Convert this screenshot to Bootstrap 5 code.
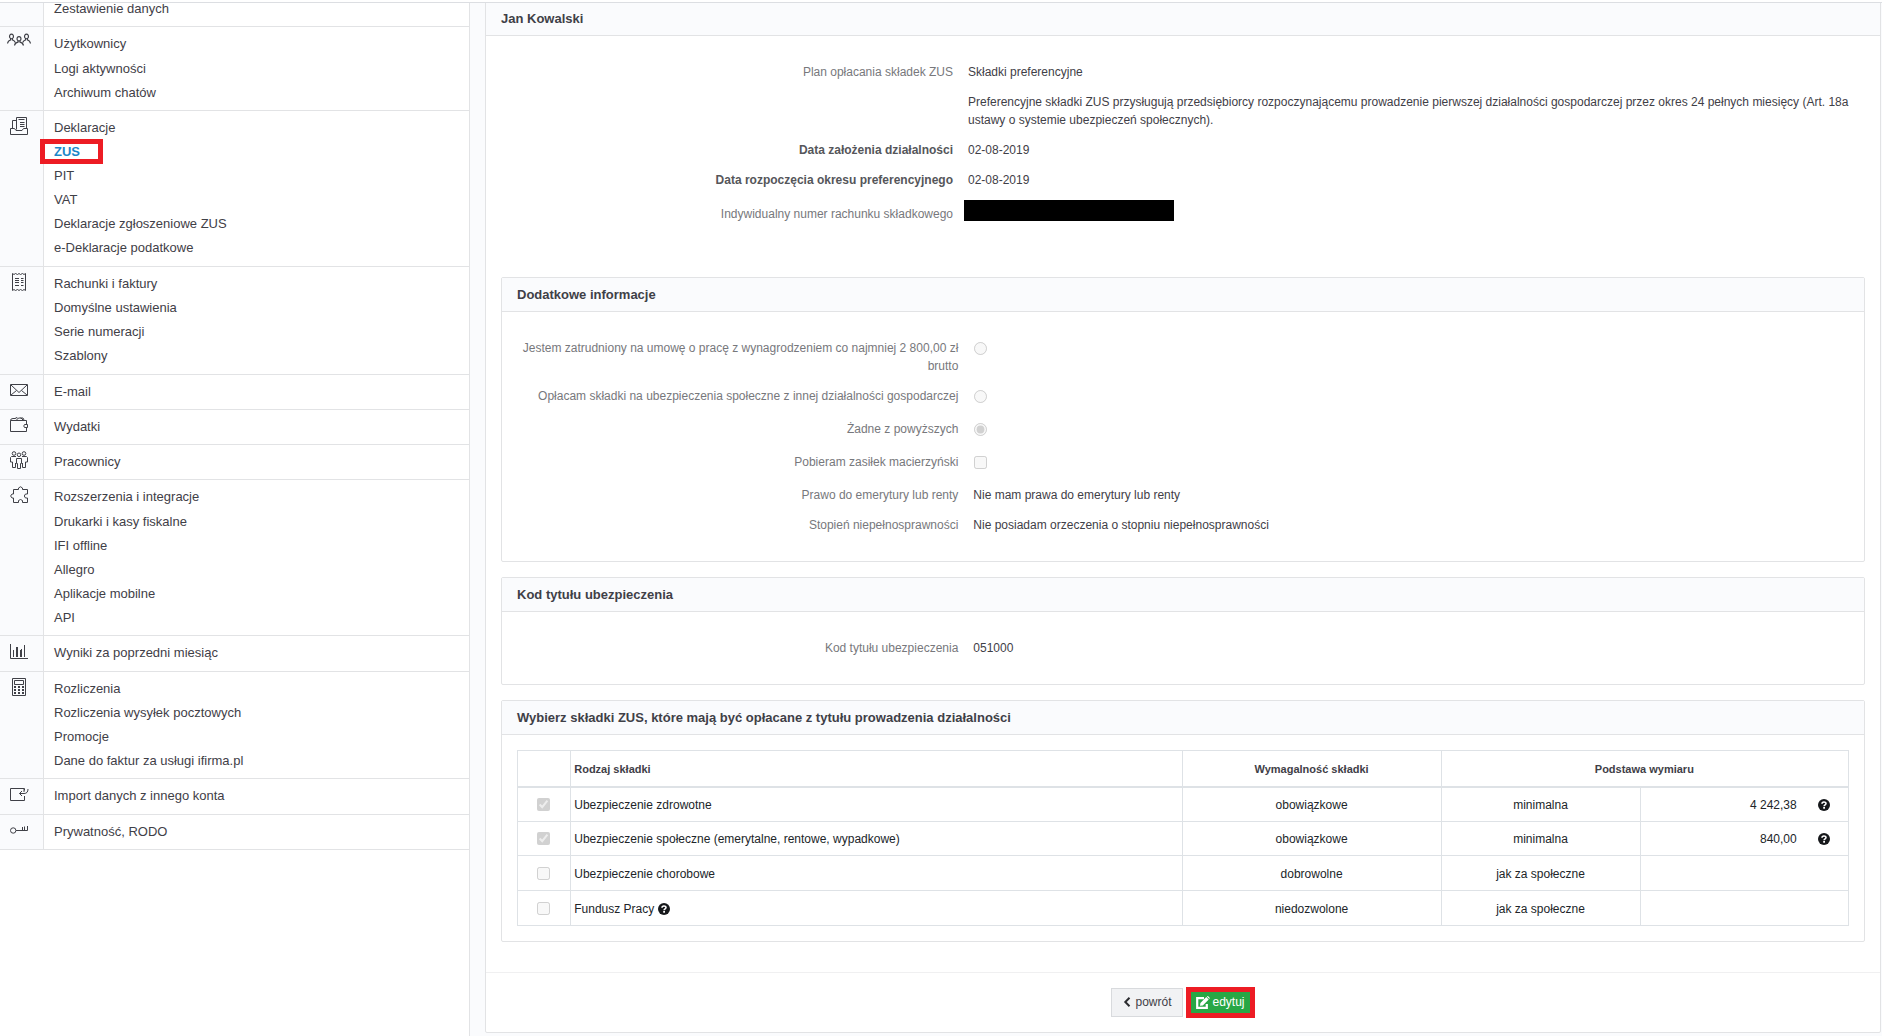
<!DOCTYPE html>
<html lang="pl">
<head>
<meta charset="utf-8">
<meta name="viewport" content="width=device-width, initial-scale=1">
<title>Deklaracje ZUS</title>
<link href="https://cdn.jsdelivr.net/npm/bootstrap@5.3.0/dist/css/bootstrap.min.css" rel="stylesheet">
<style>
:root{--line:#e2e3e5;--tint:#fafbfd;--ink:#3f4047;--red:#ed1c24}
body{font-family:"Liberation Sans",Arial,sans-serif;font-size:12px;line-height:18px;color:var(--ink);background:var(--tint)}
.top-strip{height:3px;background:#fff;border-bottom:1px solid #dcdee2;z-index:10}
/* side menu: content is scrolled slightly under the top strip */
.side-menu{width:25%;max-width:470px;margin-top:-6px;background:#fff;border-right:1px solid var(--line)}
.menu-group{border-bottom:1px solid var(--line)}
.menu-icon{flex:0 0 43px;background:var(--tint);padding:6px 0 0 10px}
.menu-icon svg{display:block;width:18px;height:18px;overflow:visible;fill:none;stroke:var(--ink);stroke-width:1}
.menu-links{border-left:1px solid var(--line);padding:5px 10px}
.menu-links.multi{padding-bottom:6px}
.menu-links.headed a:first-child{margin-bottom:1px}
.menu-links.cut{padding-top:0}
.menu-links a{display:block;width:max-content;max-width:100%;font-size:13px;line-height:24px;color:var(--ink);text-decoration:none}
.menu-links a.current{position:relative;color:#1b87c9;font-weight:700}
.menu-links a.current::after{content:"";position:absolute;inset:-1px -23px 0 -14px;border:5px solid var(--red)}
.main-area{margin:-2px 1px 3px 15px;min-width:0}
.panel{background:#fff;border:1px solid var(--line);border-radius:2px}
.panel-title{font-size:13px;font-weight:700;line-height:18px;margin:0;padding:8px 15px 7px;background:var(--tint);border-bottom:1px solid var(--line)}
.panel-inner{padding:15px}
.panel .panel{margin-bottom:15px}
.fields{padding:6px 0}
.fields .row{padding:6px 0}
.fields .field-label{text-align:right;padding-right:0;color:#77787c}
.fields .field-label.strong{font-weight:700;color:#55565a}
.fields .field-value{padding-left:15px}
.fields input{display:block;margin:3px 0 5px 1px}
.panel input{width:13px;height:13px}
.redacted{display:block;width:210px;height:21px;margin:-1px 0 0 -4px;background:#000}
.account-row .field-label{padding-top:4px}
.fields.spaced{padding-bottom:48px}
.rates{table-layout:fixed;margin:0;--bs-table-color:#212529;border-color:#dee2e6}
.rates th,.rates td{padding:8px 4px 7px 3px;vertical-align:middle;line-height:18px}
.rates tbody tr:nth-child(n+3) td{padding-top:9px}
.rates th{font-size:11px;color:var(--ink);height:36px}
.rates thead th{border-bottom:2px solid #dee2e6}
.rates input{display:block;margin:0 auto}
.c-check{width:4%}.c-kind{width:46%}.c-need{width:19.4%}.c-base{width:15%}
.amount svg{margin:0 14px 0 18px}
.help{width:12px;height:12px;vertical-align:-2px}
.actions{border-top:1px solid #f0f0f1;padding:14px;gap:3px}
.btn-plain,.btn-edit{--bs-btn-font-size:12px;--bs-btn-line-height:18px;--bs-btn-border-radius:0}
.btn-plain{--bs-btn-padding-x:10px;--bs-btn-padding-y:5px;--bs-btn-bg:#f1f2f4;--bs-btn-border-color:#d8dadd;--bs-btn-color:#3f4047;height:29px}
.btn-edit{--bs-btn-padding-x:5px;--bs-btn-padding-y:1px;--bs-btn-bg:#28a745;--bs-btn-color:#fff;--bs-btn-border-color:#ed1c24;--bs-btn-border-width:5px;height:31px}
.btn svg{margin-right:3px}
</style>
<script src="https://cdn.jsdelivr.net/npm/bootstrap@5.3.0/dist/js/bootstrap.bundle.min.js"></script>
</head>
<body>
<svg class="d-none" aria-hidden="true">
  <symbol id="q" viewBox="0 0 12 12"><circle cx="6" cy="6" r="6" fill="#16181b"/><path d="M4 4.700C4 2.500 8 2.500 8 4.600C8 5.900 6.100 5.800 6.100 7.200" fill="none" stroke="#fff" stroke-width="1.600"/><rect x="5.200" y="8" width="1.800" height="1.700" fill="#fff"/></symbol>
</svg>
<div class="top-strip sticky-top"></div>
<div class="d-flex align-items-stretch">
  <nav class="side-menu flex-shrink-0" aria-label="Menu konfiguracji">
    <div class="menu-group d-flex"><div class="menu-icon"></div>
      <div class="menu-links cut flex-grow-1"><a href="#">Zestawienie danych</a></div></div>
    <div class="menu-group d-flex"><div class="menu-icon"><svg viewBox="0 0 18 18"><path stroke-width="1.200" d="M-.3 4.500C-1.500 0 4.500 0 3.300 4.500Q1.500 7 -.3 4.500M14.700 4.500C13.500 0 19.500 0 18.300 4.500Q16.500 7 14.700 4.500M7.200 6.800C6 2.500 12 2.500 10.800 6.800Q9 9 7.200 6.800M-2.500 10.500C-2 8 -1 7.300 .6 7V5.600M2.500 5.600V7Q4.500 7.500 5.300 9.500M20.500 10.500C20 8 19 7.300 17.500 7V5.600M15.500 5.600V7Q13.500 7.500 12.700 9.500M4.500 12.500C5 10 6.500 9.500 8 9.200V8M10 8V9.200Q12.800 9.600 13.500 12.500"/></svg></div>
      <div class="menu-links headed flex-grow-1"><a href="#">Użytkownicy</a><a href="#">Logi aktywności</a><a href="#">Archiwum chatów</a></div></div>
    <div class="menu-group d-flex"><div class="menu-icon"><svg viewBox="0 0 18 18"><path d="M6.500 12.500V.5H16.500V11.500M8.500 2.500H14.500M10 5.500H14.500M10 7.500H14.500M10 9.500H14.500M6 3.500H2.500V11.500M.5 11.500H4.500L6 13.500H12L13.500 11.500H17.500V17.500H.5Z"/></svg></div>
      <div class="menu-links multi flex-grow-1"><a href="#">Deklaracje</a><a href="#" class="current">ZUS</a><a href="#">PIT</a><a href="#">VAT</a><a href="#">Deklaracje zgłoszeniowe ZUS</a><a href="#">e-Deklaracje podatkowe</a></div></div>
    <div class="menu-group d-flex"><div class="menu-icon"><svg viewBox="0 0 18 18"><path d="M2.500 .5L4 1.500L5.500 .5L7.500 1.500L9 .5L10.500 1.500L12.500 .5L14 1.500L15.500 .5V17.500L14 16.500L12.500 17.500L10.500 16.500L9 17.500L7.500 16.500L5.500 17.500L4 16.500L2.500 17.500ZM5 5.500H9M5 7.500H9M5 9.500H9M5 12.500H9M11 5.500H13.500M11 7.500H13.500M11 9.500H13.500M11 12.500H13.500"/></svg></div>
      <div class="menu-links multi flex-grow-1"><a href="#">Rachunki i faktury</a><a href="#">Domyślne ustawienia</a><a href="#">Serie numeracji</a><a href="#">Szablony</a></div></div>
    <div class="menu-group d-flex"><div class="menu-icon"><svg viewBox="0 0 18 18"><path d="M.5 3.500H17.500V14.500H.5ZM1 4L9 11.500L17 4M1 14L6.500 9.500M17 14L11.500 9.500"/></svg></div>
      <div class="menu-links flex-grow-1"><a href="#">E-mail</a></div></div>
    <div class="menu-group d-flex"><div class="menu-icon"><svg viewBox="0 0 18 18"><path d="M16.500 8.500V4.500H.5V15.500H16.500V11.500M17.500 8.500H14.500Q13 10 14.500 11.500H17.500ZM.5 4.500Q.5 2.500 3 2.500H5.500M6 4.500L8.500 2H11L13.500 4.500M5 2.500L7 1.500L8 2.500M10.500 2L13 2L14 4"/></svg></div>
      <div class="menu-links flex-grow-1"><a href="#">Wydatki</a></div></div>
    <div class="menu-group d-flex"><div class="menu-icon"><svg viewBox="0 0 18 18"><circle cx="4" cy="2.500" r="1.800"/><circle cx="14" cy="2.500" r="1.800"/><circle cx="9" cy="3.800" r="1.800"/><path d="M6 5.500H1.500L.5 6.500V11H2.500V16.500H5.500V12M12 5.500H16.500L17.500 6.500V11H15.500V16.500H12.500V12M6.500 7.500H11.500V12.500H10.500V17.500H7.500V12.500H6.500Z"/></svg></div>
      <div class="menu-links flex-grow-1"><a href="#">Pracownicy</a></div></div>
    <div class="menu-group d-flex"><div class="menu-icon"><svg viewBox="0 0 18 18"><path d="M3.500 3.500H8.500V2Q10.500 -.5 12.500 2V3.500H17.500V8H15.500Q13 10 15.500 12H17.500V16.500H12.500V14.500Q10.500 12.500 8.500 14.500V16.500H3.500V12H2Q-.8 10 2 8H3.500Z"/></svg></div>
      <div class="menu-links headed flex-grow-1"><a href="#">Rozszerzenia i integracje</a><a href="#">Drukarki i kasy fiskalne</a><a href="#">IFI offline</a><a href="#">Allegro</a><a href="#">Aplikacje mobilne</a><a href="#">API</a></div></div>
    <div class="menu-group d-flex"><div class="menu-icon"><svg viewBox="0 0 18 18"><path d="M.5 2V16.500H18M3.500 8V15M6.500 5V15M7.500 5V15M10.500 8V15M11.500 7V15M14.500 3V15"/></svg></div>
      <div class="menu-links multi flex-grow-1"><a href="#">Wyniki za poprzedni miesiąc</a></div></div>
    <div class="menu-group d-flex"><div class="menu-icon"><svg viewBox="0 0 18 18"><path d="M2.500 .5H15.500V17.500H2.500ZM4.500 2.500H13.500V6.500H4.500Z"/><path stroke-width="2" stroke-dasharray="2 2" d="M4 9H14M4 12H14M4 15H14"/></svg></div>
      <div class="menu-links flex-grow-1"><a href="#">Rozliczenia</a><a href="#">Rozliczenia wysyłek pocztowych</a><a href="#">Promocje</a><a href="#">Dane do faktur za usługi ifirma.pl</a></div></div>
    <div class="menu-group d-flex"><div class="menu-icon"><svg viewBox="0 0 18 18"><path d="M14.500 5.500V3.500H.5V15.500H14.500V11M18 4Q18 8.500 14 8.500H9.500M12 6L9.500 8.500L12 11M14 4V7"/></svg></div>
      <div class="menu-links multi flex-grow-1"><a href="#">Import danych z innego konta</a></div></div>
    <div class="menu-group d-flex"><div class="menu-icon"><svg viewBox="0 0 18 18"><circle cx="3.200" cy="9.500" r="2.700"/><path d="M6 9.500H17.500V5M14.500 9.500V5.500M12.500 9.500V6"/></svg></div>
      <div class="menu-links flex-grow-1"><a href="#">Prywatność, RODO</a></div></div>
  </nav>

  <main class="main-area flex-grow-1">
    <section class="panel">
      <h1 class="panel-title">Jan Kowalski</h1>
      <div class="panel-inner">
        <div class="fields spaced">
          <div class="row gx-3"><div class="col-4 field-label">Plan opłacania składek ZUS</div><div class="col-8 field-value">Składki preferencyjne</div></div>
          <div class="row gx-3"><div class="col-8 offset-4 field-value">Preferencyjne składki ZUS przysługują przedsiębiorcy rozpoczynającemu prowadzenie pierwszej działalności gospodarczej przez okres 24 pełnych miesięcy (Art. 18a ustawy o systemie ubezpieczeń społecznych).</div></div>
          <div class="row gx-3"><div class="col-4 field-label strong">Data założenia działalności</div><div class="col-8 field-value">02-08-2019</div></div>
          <div class="row gx-3"><div class="col-4 field-label strong">Data rozpoczęcia okresu preferencyjnego</div><div class="col-8 field-value">02-08-2019</div></div>
          <div class="row gx-3 account-row"><div class="col-4 field-label">Indywidualny numer rachunku składkowego</div><div class="col-8 field-value"><span class="redacted"></span></div></div>
        </div>

        <section class="panel">
          <h2 class="panel-title">Dodatkowe informacje</h2>
          <div class="panel-inner"><div class="fields">
            <div class="row gx-3"><label class="col-4 field-label" for="r1">Jestem zatrudniony na umowę o pracę z wynagrodzeniem co najmniej 2 800,00 zł brutto</label><div class="col-8 field-value"><input type="radio" name="other" id="r1" disabled></div></div>
            <div class="row gx-3"><label class="col-4 field-label" for="r2">Opłacam składki na ubezpieczenia społeczne z innej działalności gospodarczej</label><div class="col-8 field-value"><input type="radio" name="other" id="r2" disabled></div></div>
            <div class="row gx-3"><label class="col-4 field-label" for="r3">Żadne z powyższych</label><div class="col-8 field-value"><input type="radio" name="other" id="r3" disabled checked></div></div>
            <div class="row gx-3"><label class="col-4 field-label" for="c0">Pobieram zasiłek macierzyński</label><div class="col-8 field-value"><input type="checkbox" id="c0" disabled></div></div>
            <div class="row gx-3"><div class="col-4 field-label">Prawo do emerytury lub renty</div><div class="col-8 field-value">Nie mam prawa do emerytury lub renty</div></div>
            <div class="row gx-3"><div class="col-4 field-label">Stopień niepełnosprawności</div><div class="col-8 field-value">Nie posiadam orzeczenia o stopniu niepełnosprawności</div></div>
          </div></div>
        </section>

        <section class="panel">
          <h2 class="panel-title">Kod tytułu ubezpieczenia</h2>
          <div class="panel-inner"><div class="fields">
            <div class="row gx-3"><div class="col-4 field-label">Kod tytułu ubezpieczenia</div><div class="col-8 field-value">051000</div></div>
          </div></div>
        </section>

        <section class="panel">
          <h2 class="panel-title">Wybierz składki ZUS, które mają być opłacane z tytułu prowadzenia działalności</h2>
          <div class="panel-inner">
            <table class="table table-bordered rates text-center">
              <colgroup><col class="c-check"><col class="c-kind"><col class="c-need"><col class="c-base"><col></colgroup>
              <thead><tr><th></th><th scope="col" class="text-start">Rodzaj składki</th><th scope="col">Wymagalność składki</th><th scope="col" colspan="2">Podstawa wymiaru</th></tr></thead>
              <tbody>
                <tr><td><input type="checkbox" id="k1" disabled checked></td><td class="text-start"><label for="k1">Ubezpieczenie zdrowotne</label></td><td>obowiązkowe</td><td>minimalna</td><td class="text-end amount">4 242,38 <svg class="help"><use href="#q"/></svg></td></tr>
                <tr><td><input type="checkbox" id="k2" disabled checked></td><td class="text-start"><label for="k2">Ubezpieczenie społeczne (emerytalne, rentowe, wypadkowe)</label></td><td>obowiązkowe</td><td>minimalna</td><td class="text-end amount">840,00 <svg class="help"><use href="#q"/></svg></td></tr>
                <tr><td><input type="checkbox" id="k3" disabled></td><td class="text-start"><label for="k3">Ubezpieczenie chorobowe</label></td><td>dobrowolne</td><td>jak za społeczne</td><td></td></tr>
                <tr><td><input type="checkbox" id="k4" disabled></td><td class="text-start"><label for="k4">Fundusz Pracy</label> <svg class="help"><use href="#q"/></svg></td><td>niedozwolone</td><td>jak za społeczne</td><td></td></tr>
              </tbody>
            </table>
          </div>
        </section>
      </div>
      <div class="actions d-flex justify-content-center align-items-center">
        <button type="button" class="btn btn-plain d-flex align-items-center"><svg width="10" height="10" viewBox="0 0 10 10"><path d="M7.500 .8L3.300 5L7.500 9.200" fill="none" stroke="#2b2c30" stroke-width="2"/></svg>powrót</button>
        <button type="button" class="btn btn-edit d-flex align-items-center"><svg width="14" height="13" viewBox="0 0 14 13"><path d="M8 2.200H1.200V11.800H10.800V8" fill="none" stroke="#fff" stroke-width="2.200"/><path d="M4 9.800L4.400 7L10.300 1.100L12.700 3.500L6.800 9.400Z M10.900 .5Q11.700 -.3 12.500 .5L13.400 1.400Q14.100 2.100 13.300 2.900Z" fill="#fff"/></svg>edytuj</button>
      </div>
    </section>
  </main>
</div>
</body>
</html>
